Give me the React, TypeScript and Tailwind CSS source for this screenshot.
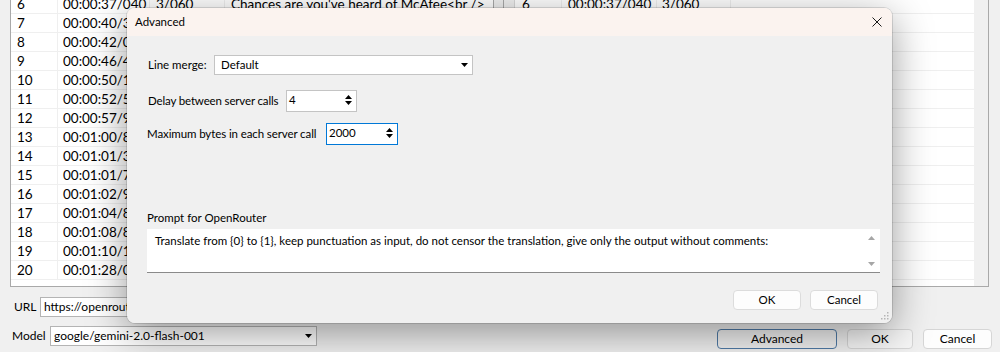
import React from "react";

type Row = [string, string, string, string];

const rows: Row[] = [
  ["6", "00:00:37/040", "3/060", "Chances are you've heard of McAfee<br />"],
  ["7", "00:00:40/360", "1/640", "the antivirus company."],
  ["8", "00:00:42/000", "4/440", "But have you heard of"],
  ["9", "00:00:46/440", "3/740", "the man behind it?"],
  ["10", "00:00:50/180", "2/400", "John McAfee"],
  ["11", "00:00:52/580", "5/400", "was a millionaire"],
  ["12", "00:00:57/980", "2/880", "who lived"],
  ["13", "00:01:00/860", "0/520", "in Belize"],
  ["14", "00:01:01/380", "0/400", "and"],
  ["15", "00:01:01/780", "1/190", "he was"],
  ["16", "00:01:02/970", "1/850", "wanted for"],
  ["17", "00:01:04/820", "4/020", "questioning"],
  ["18", "00:01:08/840", "1/280", "in a murder"],
  ["19", "00:01:10/120", "18/900", "case."],
  ["20", "00:01:28/020", "2/100", "End"],
];

function DownTri({ color = "#000" }: { color?: string }) {
  return (
    <svg width="7" height="4" viewBox="0 0 7 4">
      <path d="M0 0H7L3.5 4Z" fill={color} />
    </svg>
  );
}

function UpTri({ color = "#000" }: { color?: string }) {
  return (
    <svg width="7" height="4" viewBox="0 0 7 4">
      <path d="M0 4H7L3.5 0Z" fill={color} />
    </svg>
  );
}

function SpinArrows() {
  return (
    <svg width="7" height="10" viewBox="0 0 7 10">
      <path d="M0 4L3.5 0L7 4Z M0 6H7L3.5 10Z" fill="#000" />
    </svg>
  );
}

function LeftTable() {
  return (
    <div className="w-[484px] h-[287px] overflow-hidden bg-white border-l border-r border-b border-[#a9a9a9]">
      <div className="-mt-[5px]">
        {rows.map((r) => (
          <div key={r[0]} className="flex h-[19px] items-center border-b border-[#efefef] whitespace-nowrap">
            <div className="w-[47px] h-full flex items-center pl-[6px] border-r border-[#efefef]">{r[0]}</div>
            <div className="w-[92px] h-full flex items-center pl-[5px] border-r border-[#efefef] overflow-hidden">{r[1]}</div>
            <div className="w-[75px] h-full flex items-center pl-[6px] border-r border-[#efefef]">{r[2]}</div>
            <div className="flex-1 h-full flex items-center pl-[6px] overflow-hidden">{r[3]}</div>
          </div>
        ))}
      </div>
    </div>
  );
}

function RightTable() {
  return (
    <div className="flex w-[486px] h-[287px] overflow-hidden bg-[#f0f0f0] border-l border-r border-b border-[#a9a9a9]">
      <div className="w-[11px] h-full bg-[#f0f0f0] border-r border-[#d8d8d8]" />
      <div className="flex-1 bg-white overflow-hidden">
        <div className="-mt-[5px]">
          {rows.map((r) => (
            <div key={r[0]} className="flex h-[19px] items-center border-b border-[#efefef] whitespace-nowrap">
              <div className="w-[47px] h-full flex items-center pl-[7px] border-r border-[#efefef]">{r[0]}</div>
              <div className="w-[95px] h-full flex items-center pl-[6px] border-r border-[#efefef]">{r[1]}</div>
              <div className="w-[74px] h-full flex items-center pl-[5px] border-r border-[#efefef]">{r[2]}</div>
              <div className="flex-1 h-full" />
            </div>
          ))}
        </div>
      </div>
      <div className="w-[14px] h-full bg-[#f0f0f0]" />
    </div>
  );
}

function MainWindow() {
  return (
    <div className="flex flex-col h-full text-[13.5px] text-black">
      <div className="flex pl-[10px]">
        <LeftTable />
        <div className="ml-[9px]">
          <RightTable />
        </div>
      </div>
      <div className="flex items-center mt-[10px] h-[20px] text-[12px]">
        <div className="w-[40px] pl-[14px]">URL</div>
        <div className="w-[450px] h-[20px] bg-white border border-[#b4b4b4] flex items-center pl-[3px] whitespace-nowrap overflow-hidden">
          https://openrouter.ai/api/v1/chat/completions
        </div>
      </div>
      <div className="flex justify-between items-start mt-[9px] text-[12px]">
        <div className="flex items-center">
          <div className="w-[50px] pl-[12px]">Model</div>
          <div className="w-[267px] h-[20px] bg-white border border-[#b4b4b4] flex items-center justify-between pl-[3px] pr-[4px]">
            <span>google/gemini-2.0-flash-001</span>
            <DownTri />
          </div>
        </div>
        <div className="flex gap-[10px] pr-[8px] mt-[3px]">
          <div className="w-[120px] h-[20px] rounded-[4px] bg-[#f0f0f0] border border-[#4f7aa6] flex items-center justify-center">
            Advanced
          </div>
          <div className="w-[66px] h-[20px] rounded-[4px] bg-[#f6f6f6] border border-[#d6d6d6] flex items-center justify-center">
            OK
          </div>
          <div className="w-[69px] h-[20px] rounded-[4px] bg-[#fdfdfd] border border-[#d6d6d6] flex items-center justify-center">
            Cancel
          </div>
        </div>
      </div>
    </div>
  );
}

function Dialog() {
  return (
    <div className="absolute left-[127px] top-[8px] w-[765px] h-[315px] rounded-[8px] overflow-hidden shadow-[0_10px_40px_rgba(0,0,0,0.4),0_0_0_1px_rgba(0,0,0,0.12)] text-[11.5px] text-black whitespace-nowrap">
      <div className="h-[28px] bg-[#fbf3ef] flex items-center justify-between pl-[8px] pr-[10px]">
        <span>Advanced</span>
        <svg width="10" height="10" viewBox="0 0 10 10">
          <path d="M0.5 0.5L9.5 9.5M9.5 0.5L0.5 9.5" stroke="#1a1a1a" strokeWidth="1" />
        </svg>
      </div>
      <div className="relative h-[287px] bg-[#f0f0f0] pl-[20px] pr-[12px] flex flex-col">
        <div className="flex items-center mt-[19px] h-[20px]">
          <div className="w-[67px] pl-[1px]">Line merge:</div>
          <div className="w-[259px] h-[20px] bg-white border border-[#c4c4c4] flex items-center justify-between pl-[6px] pr-[4px]">
            <span>Default</span>
            <DownTri />
          </div>
        </div>
        <div className="flex items-center mt-[15px] h-[22px]">
          <div className="w-[139px] pl-[1px] tracking-[-0.15px]">Delay between server calls</div>
          <div className="w-[71px] h-[22px] bg-white border border-[#c4c4c4] flex items-center justify-between pl-[2px] pr-[4px] pb-[2px]">
            <span>4</span>
            <SpinArrows />
          </div>
        </div>
        <div className="flex items-center mt-[11px] h-[22px]">
          <div className="w-[179px] tracking-[-0.1px]">Maximum bytes in each server call</div>
          <div className="w-[72px] h-[22px] bg-white border border-[#0078d7] flex items-center justify-between pl-[2px] pr-[4px] pb-[2px]">
            <span>2000</span>
            <SpinArrows />
          </div>
        </div>
        <div className="mt-[65px] h-[16px] leading-[16px]">Prompt for OpenRouter</div>
        <div className="mt-[3px] h-[44px] bg-white border-b border-[#8a8a8a] flex">
          <div className="flex-1 pl-[8px] pt-[3px] overflow-hidden">
            Translate from {"{0}"} to {"{1}"}, keep punctuation as input, do not censor the translation, give only the output without comments:
          </div>
          <div className="w-[17px] flex flex-col items-center justify-between pt-[7px] pb-[6px]">
            <UpTri color="#a6a6a6" />
            <DownTri color="#a6a6a6" />
          </div>
        </div>
        <div className="flex justify-end gap-[9px] mt-[17px] pr-[2px]">
          <div className="w-[68px] h-[20px] rounded-[4px] bg-[#fdfdfd] border border-[#dcdcdc] flex items-center justify-center">
            OK
          </div>
          <div className="w-[68px] h-[20px] rounded-[4px] bg-[#fdfdfd] border border-[#dcdcdc] flex items-center justify-center">
            Cancel
          </div>
        </div>
        <svg className="absolute right-[3px] bottom-[3px]" width="8" height="8" viewBox="0 0 8 8">
          <g fill="#b5b5b5">
            <rect x="6" y="0" width="1.5" height="1.5" />
            <rect x="3" y="3" width="1.5" height="1.5" />
            <rect x="6" y="3" width="1.5" height="1.5" />
            <rect x="0" y="6" width="1.5" height="1.5" />
            <rect x="3" y="6" width="1.5" height="1.5" />
            <rect x="6" y="6" width="1.5" height="1.5" />
          </g>
        </svg>
      </div>
    </div>
  );
}

export default function App() {
  return (
    <div className="relative w-[1000px] h-[352px] overflow-hidden bg-[#f0f0f0] font-['Lato',sans-serif]">
      <MainWindow />
      <Dialog />
    </div>
  );
}
